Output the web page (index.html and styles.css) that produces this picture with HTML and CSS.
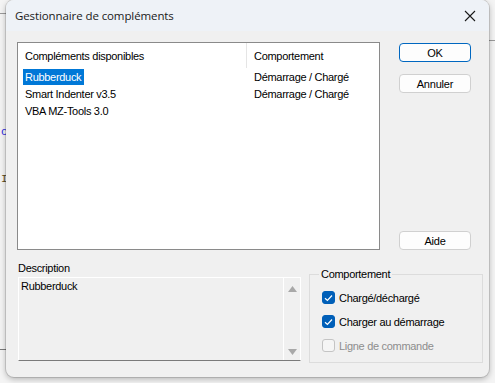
FILE: index.html
```html
<!DOCTYPE html>
<html lang="fr">
<head>
<meta charset="utf-8">
<link rel="stylesheet" href="styles.css">
</head>
<body>
<div class="desk">
  <div class="bgline l1"></div>
  <div class="bgline l2"></div>
  <div class="bgline l3"></div>
  <span class="peek p1">c</span>
  <span class="peek p2">I</span>
  <div class="dialog">
    <div class="titlebar">
      <span class="title">Gestionnaire de compléments</span>
      <svg class="close" width="12" height="12" viewBox="0 0 12 12"><path d="M1 1L11 11M11 1L1 11" stroke="#1a1a1a" stroke-width="1.1" fill="none"/></svg>
    </div>
    <div class="content">
      <div class="toprow">
        <div class="listbox">
          <div class="lhead">
            <div class="c1">Compléments disponibles</div>
            <div class="c2">Comportement</div>
          </div>
          <div class="lrow"><div class="c1"><span class="sel">Rubberduck</span></div><div class="c2">Démarrage / Chargé</div></div>
          <div class="lrow"><div class="c1">Smart Indenter v3.5</div><div class="c2">Démarrage / Chargé</div></div>
          <div class="lrow"><div class="c1">VBA MZ-Tools 3.0</div><div class="c2"></div></div>
        </div>
        <div class="buttons">
          <button class="btn default">OK</button>
          <button class="btn">Annuler</button>
          <button class="btn aide">Aide</button>
        </div>
      </div>
      <div class="bottomrow">
        <div class="desc">
          <div class="dlabel">Description</div>
          <div class="dbox">
            <div class="dtext">Rubberduck</div>
            <div class="scroll">
              <svg width="9" height="6" viewBox="0 0 9 6"><path d="M0 6L4.5 0L9 6Z" fill="#a8a8a8"/></svg>
              <svg width="9" height="6" viewBox="0 0 9 6"><path d="M0 0L4.5 6L9 0Z" fill="#a8a8a8"/></svg>
            </div>
          </div>
        </div>
        <fieldset class="group">
          <legend>Comportement</legend>
          <label class="chk"><span class="box on"><svg width="9" height="8" viewBox="0 0 9 8"><path d="M1 4.2L3.4 6.5L8 1.5" stroke="#fff" stroke-width="1.2" fill="none"/></svg></span>Chargé/déchargé</label>
          <label class="chk"><span class="box on"><svg width="9" height="8" viewBox="0 0 9 8"><path d="M1 4.2L3.4 6.5L8 1.5" stroke="#fff" stroke-width="1.2" fill="none"/></svg></span>Charger au démarrage</label>
          <label class="chk dis"><span class="box"></span>Ligne de commande</label>
        </fieldset>
      </div>
    </div>
  </div>
</div>
</body>
</html>
```
FILE: styles.css
```css
html, body {
  margin: 0;
  padding: 0;
}
body {
  width: 495px;
  height: 383px;
  overflow: hidden;
  background: #f4f4f4;
  font-family: "Liberation Sans", Arial, sans-serif;
  letter-spacing: -0.3px;
}
.desk {
  position: relative;
  width: 495px;
  height: 383px;
}
.bgline {
  position: absolute;
  background: #9a9a9a;
  height: 1px;
}
.l1 { left: 0; top: 13px; width: 8px; }
.l2 { left: 488px; top: 40px; width: 7px; }
.l3 { left: 0; top: 349px; width: 8px; background: #7a7a7a; }
.peek {
  position: absolute;
  left: 1px;
  font-family: "Liberation Mono", monospace;
  font-size: 11px;
}
.p1 { top: 126px; color: #2a2ae0; }
.p2 { top: 173px; color: #5a4a20; }
.dialog {
  position: absolute;
  left: 6px;
  top: 0;
  width: 483px;
  height: 377px;
  background: #f0f0f0;
  border-radius: 8px;
  box-shadow: 0 0 0 1px rgba(0,0,0,0.12), 0 2px 6px rgba(0,0,0,0.28);
  overflow: hidden;
}
.titlebar {
  height: 31px;
  background: #eef2f7;
  display: flex;
  align-items: center;
  justify-content: space-between;
  padding: 0 13px 0 9px;
}
.title {
  font-family: "Open Sans", "Noto Sans", sans-serif;
  font-size: 11.5px;
  color: #1a1a1a;
  letter-spacing: -0.1px;
}
.close { display: block; }
.content {
  padding: 11px 0 0 11px;
}
.toprow {
  display: flex;
  height: 208px;
}
.listbox {
  width: 361px;
  height: 206px;
  background: #fff;
  border: 1px solid #8a8a8a;
  font-size: 11px;
  color: #000;
}
.lhead, .lrow {
  display: flex;
}
.lhead {
  height: 25px;
  align-items: center;
}
.lhead .c1 {
  border-right: 1px solid #e5e5e5;
  align-self: stretch;
  display: flex;
  align-items: center;
}
.c1 {
  width: 221px;
  padding-left: 7px;
}
.c2 {
  padding-left: 7px;
}
.lrow {
  height: 17px;
  align-items: center;
}
.lrow .c1 { padding-left: 7px; width: 221px; }
.sel {
  background: #0078d7;
  color: #fff;
  padding: 2px 3px 2px 2px;
  margin-left: -2px;
}
.lrow .c2 { padding-left: 8px; }
.buttons {
  display: flex;
  flex-direction: column;
  margin-left: 19px;
  padding-top: 1px;
}
.btn {
  width: 72px;
  height: 19px;
  background: #fdfdfd;
  border: 1px solid #d0d0d0;
  border-radius: 4px;
  font-family: "Liberation Sans", Arial, sans-serif;
  letter-spacing: -0.2px;
  font-size: 11px;
  color: #000;
  padding: 0;
  margin-bottom: 12px;
}
.btn.default {
  border-color: #0067c0;
}
.btn.aide {
  margin-top: auto;
  margin-bottom: 0;
}
.bottomrow {
  display: flex;
  margin-top: 12px;
}
.desc {
  width: 283px;
  margin-left: 1px;
}
.dlabel {
  font-size: 11px;
  height: 15px;
  color: #000;
}
.dbox {
  height: 82px;
  border-top: 1px solid #fff;
  border-left: 1px solid #fff;
  border-right: 1px solid #fff;
  border-bottom: 1px solid #7a7a7a;
  display: flex;
  background: #f0f0f0;
}
.dtext {
  flex: 1;
  font-size: 11px;
  padding: 2px 2px;
  border-right: 1px solid #fff;
}
.scroll {
  width: 16px;
  display: flex;
  flex-direction: column;
  justify-content: space-between;
  align-items: center;
  padding: 8px 0 5px;
}
.scroll svg { display: block; }
.group {
  margin: 6px 0 0 8px;
  width: 174px;
  height: 95px;
  box-sizing: border-box;
  border: 1px solid #dcdcdc;
  padding: 11px 0 0 12px;
  font-size: 11px;
}
.group legend {
  padding: 0 2px 0 2px;
  margin-left: -3px;
  font-size: 11px;
}
.chk {
  display: flex;
  align-items: center;
  height: 13px;
  margin-bottom: 11px;
  color: #000;
}
.box {
  width: 13px;
  height: 13px;
  box-sizing: border-box;
  border-radius: 3px;
  border: 1px solid #c4c4c4;
  background: #f5f5f5;
  margin-right: 4px;
  display: flex;
  align-items: center;
  justify-content: center;
}
.box.on {
  background: #005fb8;
  border-color: #005fb8;
}
.chk.dis { color: #8d8d8d; }
```
